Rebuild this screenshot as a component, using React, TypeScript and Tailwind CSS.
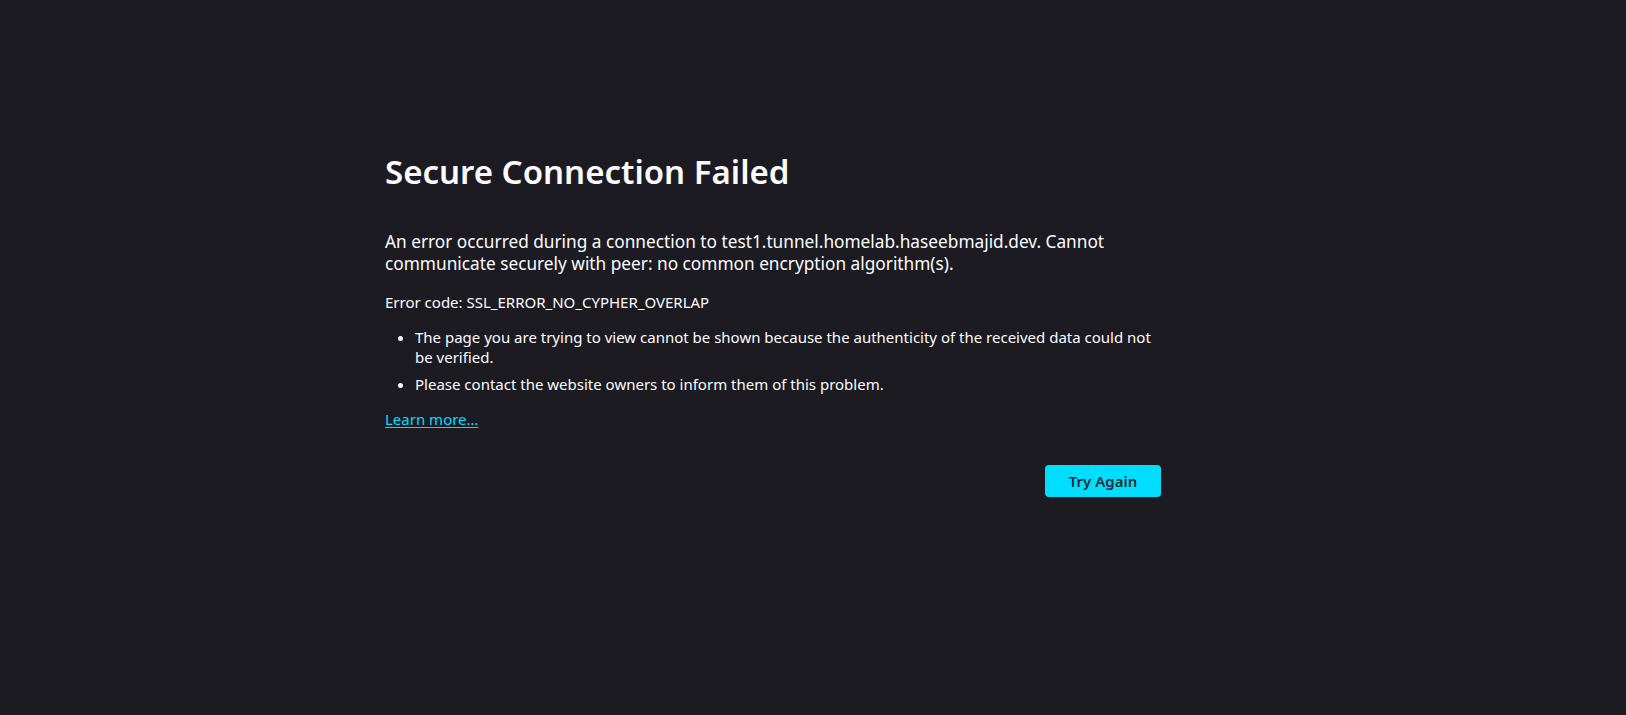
import React from "react";

export default function App() {
  return (
    <div className="min-h-[715px] w-full bg-[#1c1b22] text-[#fbfbfe] font-['Noto_Sans',sans-serif] pl-[385px] pt-[152px]">
      <div className="w-[776px] flex flex-col">
        <h1 className="text-[33px] leading-[40px] font-semibold">Secure Connection Failed</h1>
        <p className="mt-[39px] text-[17.25px] leading-[22px]">
          An error occurred during a connection to test1.tunnel.homelab.haseebmajid.dev. Cannot communicate securely with peer: no common encryption algorithm(s).
        </p>
        <p className="mt-[16.5px] text-[15px] leading-[20px]">Error code: SSL_ERROR_NO_CYPHER_OVERLAP</p>
        <ul className="mt-[15px] text-[15px] leading-[20px] list-disc pl-[30px] flex flex-col gap-[7.5px]">
          <li>The page you are trying to view cannot be shown because the authenticity of the received data could not be verified.</li>
          <li>Please contact the website owners to inform them of this problem.</li>
        </ul>
        <a href="#" className="mt-[15px] self-start text-[15px] leading-[20px] text-[#00ddff] underline underline-offset-[2px]">
          Learn more…
        </a>
        <div className="mt-[36px] flex justify-end">
          <button className="h-[32px] w-[116px] rounded-[4px] bg-[#00ddff] text-[#2b2a33] text-[15px] font-semibold">
            Try Again
          </button>
        </div>
      </div>
    </div>
  );
}
